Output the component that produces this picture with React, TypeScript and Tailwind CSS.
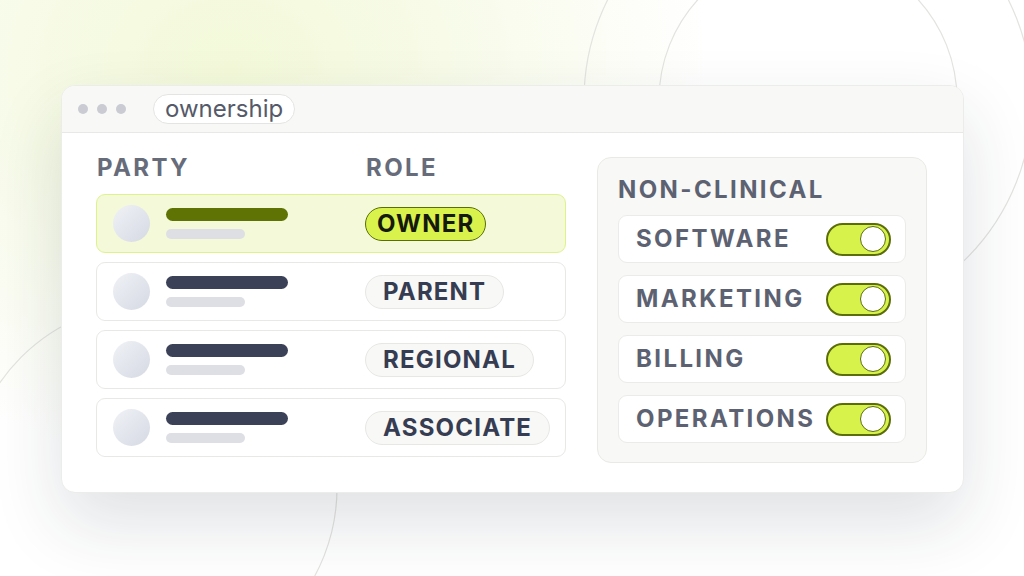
import React from "react"

const parties = [
  { role: "OWNER", active: true },
  { role: "PARENT", active: false },
  { role: "REGIONAL", active: false },
  { role: "ASSOCIATE", active: false },
]

const scopes = ["SOFTWARE", "MARKETING", "BILLING", "OPERATIONS"]

function Toggle() {
  return (
    <div className="flex h-[33px] w-[65px] items-center justify-end rounded-full border-2 border-[#5b6d08] bg-[#d8f24c] pr-[3px]">
      <div className="h-[26px] w-[26px] rounded-full border-[1.5px] border-[#5b6d08] bg-white" />
    </div>
  )
}

function PartyRow({ role, active }: { role: string; active: boolean }) {
  return (
    <div
      className={
        active
          ? "flex h-[59px] items-center rounded-[9px] border border-[#def28c] bg-[#f3f9d9] pl-[16px]"
          : "flex h-[59px] items-center rounded-[9px] border border-[#e8e8e6] bg-white pl-[16px]"
      }
    >
      <div className="flex w-[252px] items-center gap-[16px]">
        <div className="h-[37px] w-[37px] rounded-full bg-gradient-to-br from-[#f0f2f6] to-[#d5d9e3]" />
        <div className="flex flex-col gap-[8px]">
          <div className={active ? "h-[13px] w-[122px] rounded-full bg-[#5e7304]" : "h-[13px] w-[122px] rounded-full bg-[#3b4258]"} />
          <div className="h-[10px] w-[79px] rounded-full bg-[#dedfe4]" />
        </div>
      </div>
      {active ? (
        <div className="flex h-[34px] items-center rounded-full border-[1.5px] border-[#5b6d08] bg-[#d9f24c] px-[11px] text-[24px] font-bold leading-none tracking-[0.05em] text-[#151a0c]">
          {role}
        </div>
      ) : (
        <div className="flex h-[34px] items-center rounded-full border border-[#e7e7e4] bg-[#f8f8f6] px-[17px] text-[24px] font-bold leading-none tracking-[0.05em] text-[#363d52]">
          {role}
        </div>
      )}
    </div>
  )
}

export default function App() {
  return (
    <div className="relative h-[576px] w-full overflow-hidden bg-white pl-[61px] pt-[85px] font-['Inter',sans-serif]">
      {/* soft lime glow */}
      <div className="pointer-events-none absolute inset-0 bg-[radial-gradient(ellipse_480px_400px_at_230px_70px,#f3f9d9_0%,#f7fbe8_45%,rgba(255,255,255,0)_100%)]" />

      {/* background rings */}
      <svg className="pointer-events-none absolute inset-0" width="1024" height="576" viewBox="0 0 1024 576" fill="none">
        <circle cx="808" cy="100" r="224" stroke="#e3e3e0" strokeWidth="1.2" />
        <circle cx="808" cy="100" r="149" stroke="#e3e3e0" strokeWidth="1.2" />
        <circle cx="152" cy="488" r="185" stroke="#e3e3e0" strokeWidth="1.2" />
      </svg>

      <div className="relative w-[903px] overflow-hidden rounded-[14px] border border-[#ececea] bg-white shadow-[0_30px_70px_rgba(30,41,59,0.14)]">
        <div className="flex h-[47px] items-center border-b border-[#e8e8e6] bg-[#f8f8f6] pl-[16px]">
          <div className="flex gap-[9px]">
            <div className="h-[10px] w-[10px] rounded-full bg-[#cacbd3]" />
            <div className="h-[10px] w-[10px] rounded-full bg-[#cacbd3]" />
            <div className="h-[10px] w-[10px] rounded-full bg-[#cacbd3]" />
          </div>
          <div className="ml-[27px] flex h-[30px] items-center rounded-full border border-[#e4e4e2] bg-white px-[11px] text-[24px] leading-none text-[#555a69]">
            ownership
          </div>
        </div>

        <div className="flex items-start gap-[31px] pb-[29px] pl-[34px] pt-[23px]">
          <div className="flex w-[470px] flex-col">
            <div className="flex pl-[1px] text-[24px] font-bold leading-none tracking-[0.1em] text-[#676c7b]">
              <div className="w-[269px]">PARTY</div>
              <div>ROLE</div>
            </div>
            <div className="mt-[14px] flex flex-col gap-[9px]">
              {parties.map((p) => (
                <PartyRow key={p.role} role={p.role} active={p.active} />
              ))}
            </div>
          </div>

          <div className="mt-[1px] flex w-[330px] flex-col rounded-[14px] border border-[#e9e9e5] bg-[#f8f8f6] px-[20px] pb-[19px] pt-[20px]">
            <div className="text-[24px] font-bold leading-none tracking-[0.1em] text-[#5d6272]">NON-CLINICAL</div>
            <div className="mt-[13px] flex flex-col gap-[12px]">
              {scopes.map((s) => (
                <div
                  key={s}
                  className="flex h-[48px] items-center justify-between rounded-[9px] border border-[#ebebe9] bg-white pl-[17px] pr-[14px]"
                >
                  <span className="text-[24px] font-bold leading-none tracking-[0.1em] text-[#5d6272]">{s}</span>
                  <Toggle />
                </div>
              ))}
            </div>
          </div>
        </div>
      </div>
    </div>
  )
}
